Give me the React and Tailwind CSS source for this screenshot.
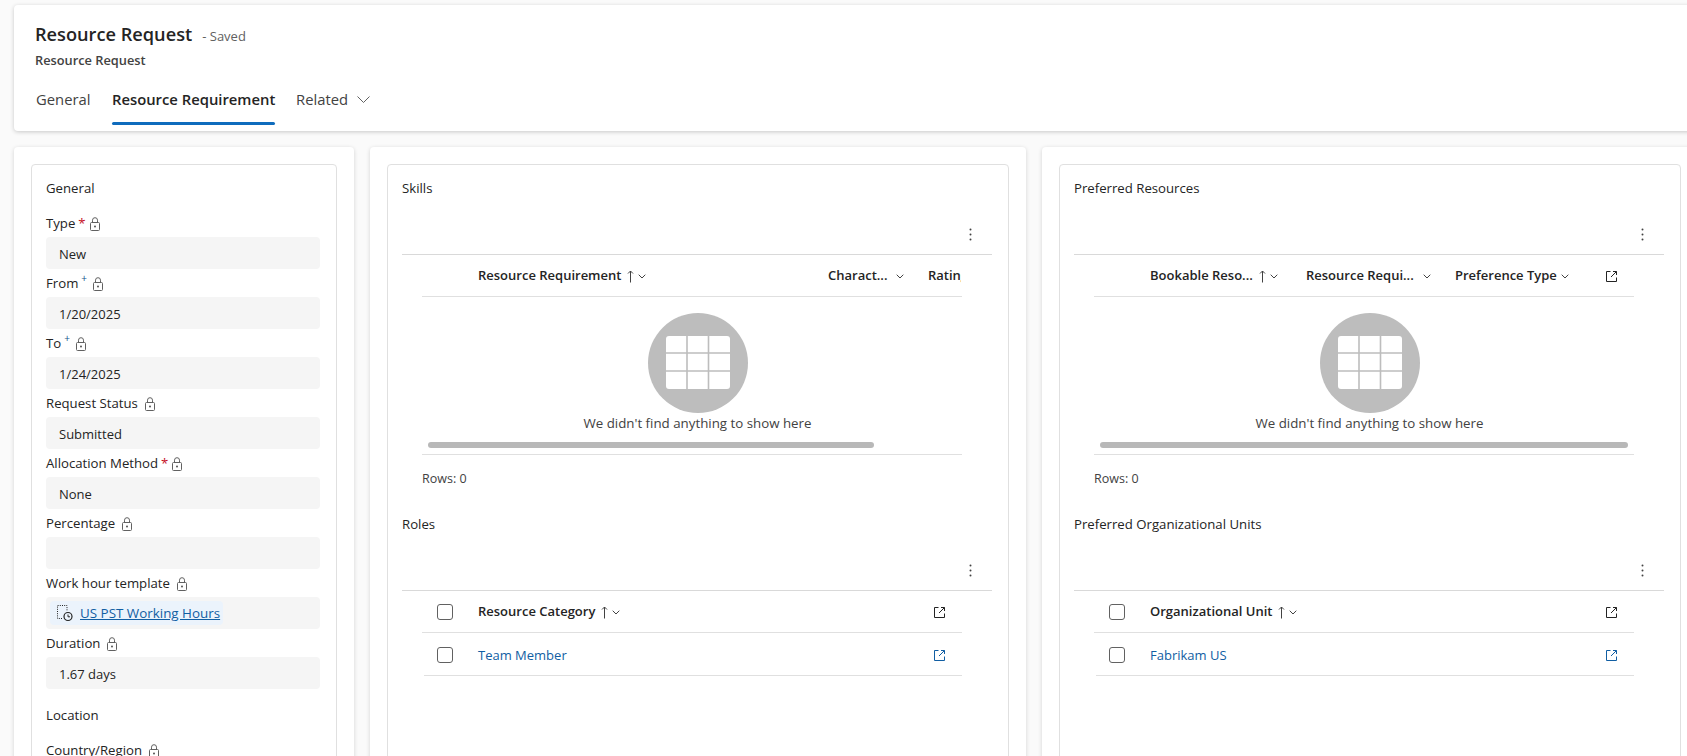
const fields = [
  { label: 'Type', mark: '*', value: 'New' },
  { label: 'From', mark: '+', value: '1/20/2025' },
  { label: 'To', mark: '+', value: '1/24/2025' },
  { label: 'Request Status', value: 'Submitted' },
  { label: 'Allocation Method', mark: '*', value: 'None' },
  { label: 'Percentage', value: '' },
  { label: 'Work hour template', lookup: 'US PST Working Hours' },
  { label: 'Duration', value: '1.67 days' },
];

function LockIcon() {
  return (
    <svg width="10" height="14" viewBox="0 0 10 14" fill="none" stroke="#616161" className="shrink-0">
      <rect x="0.5" y="5.5" width="9" height="8" rx="1" />
      <path d="M2.5 5.5V3.2a2.5 2.5 0 0 1 5 0v2.3" />
      <circle cx="5" cy="9.5" r="0.9" fill="#424242" stroke="none" />
    </svg>
  );
}

function RecordIcon() {
  return (
    <svg width="18" height="18" viewBox="0 0 18 18" fill="none" className="shrink-0">
      <path d="M6 14.5H1.5V1.5H11V7" stroke="#242424" strokeDasharray="1 1.2" />
      <circle cx="12" cy="12.5" r="4" stroke="#242424" strokeWidth="1.2" />
      <path d="M12 10.5v2.3h2" stroke="#242424" />
    </svg>
  );
}

function Chevron({ className = '' }) {
  return (
    <svg width="8" height="5" viewBox="0 0 8 5" fill="none" stroke="#424242" className={`shrink-0 ${className}`}>
      <path d="M0.7 0.7 4 4l3.3-3.3" />
    </svg>
  );
}

function SortArrow({ className = '' }) {
  return (
    <svg width="7" height="13" viewBox="0 0 7 13" fill="none" stroke="#424242" className={`shrink-0 ${className}`}>
      <path d="M3.5 12.5V1M1 3.5 3.5 1 6 3.5" />
    </svg>
  );
}

function OpenIcon({ color = '#242424' }) {
  return (
    <svg width="11" height="11" viewBox="0 0 11 11" fill="none" stroke={color} className="shrink-0">
      <path d="M4.5 0.5H0.5v10h10v-4M7 0.5h3.5V4M10.5 0.5 5 6" />
    </svg>
  );
}

function Kebab() {
  return (
    <svg width="3" height="13" viewBox="0 0 3 13" fill="#424242" className="shrink-0">
      <circle cx="1.5" cy="1.5" r="1" />
      <circle cx="1.5" cy="6.5" r="1" />
      <circle cx="1.5" cy="11.5" r="1" />
    </svg>
  );
}

function EmptyGrid() {
  return (
    <svg width="100" height="100" viewBox="0 0 100 100">
      <circle cx="50" cy="50" r="50" fill="#bdbdbd" />
      <rect x="18" y="23" width="64" height="53" rx="3" fill="#ffffff" />
      <path d="M39 23v53M60.5 23v53M18 40h64M18 58h64" stroke="#bdbdbd" strokeWidth="1.6" />
    </svg>
  );
}

function Checkbox() {
  return <span className="block h-4 w-4 rounded-[3px] border border-[#616161] bg-white" />;
}

function HeaderCell({ label, width, sorted }) {
  return (
    <div className={`flex h-full shrink-0 items-center overflow-hidden ${width}`}>
      <span className="whitespace-nowrap">{label}</span>
      {sorted && <SortArrow className="ml-[6px]" />}
      {sorted && <Chevron className="ml-[4px]" />}
    </div>
  );
}

function SubGrid({ title, children }) {
  return (
    <div>
      <div className="flex h-[46px] items-center pt-[2px] text-[13.2px] text-[#242424]">{title}</div>
      <div className="flex h-[44px] items-center justify-end border-b border-[#d9d9d9] pt-[3px] pr-[20px]">
        <Kebab />
      </div>
      {children}
    </div>
  );
}

function EmptyBody({ thumb }) {
  return (
    <>
      <div className="-mr-[1px] flex flex-col items-center pt-4">
        <EmptyGrid />
        <div className="flex h-5 items-center pt-[2px] text-[13.3px] text-[#424242]">We didn't find anything to show here</div>
      </div>
      <div className="mt-[9px] ml-[26px] h-[6px] rounded-[3px] bg-[#b8b8b8]" style={{ width: thumb }} />
      <div className="mt-[6px] mr-[30px] ml-5 h-px bg-[#e0e0e0]" />
      <div className="ml-5 flex h-[46px] items-center pt-[2px] text-[12.5px] text-[#424242]">Rows: 0</div>
    </>
  );
}

function Row({ name }) {
  return (
    <div className="mr-[30px] ml-[22px] flex h-[43px] items-center border-b border-[#e0e0e0] pt-px">
      <span className="ml-[13px] w-[41px]">
        <Checkbox />
      </span>
      <span className="pt-[2px] text-[#115ea3]">{name}</span>
      <span className="mt-[2px] mr-[17px] ml-auto">
        <OpenIcon color="#115ea3" />
      </span>
    </div>
  );
}

function GridHead({ children, open }) {
  return (
    <div className="mr-[30px] ml-5 flex h-[42px] items-center border-b border-[#e0e0e0] pt-px font-semibold text-[#242424]">
      {children}
      {open && (
        <span className="mr-[17px] ml-auto">
          <OpenIcon />
        </span>
      )}
    </div>
  );
}

function App() {
  return (
    <div className="h-[756px] w-[1687px] overflow-hidden bg-[#fafafa] pt-[5px] pl-[14px] font-['Open_Sans',sans-serif] text-[13px] text-[#242424]">
      <div className="h-[126px] w-[1690px] rounded-[4px] bg-white pt-[17px] pl-[21px] shadow-[0_1px_4px_rgba(0,0,0,0.2)]">
        <div className="flex h-[26px] items-center">
          <span className="text-[18.2px] font-semibold">Resource Request</span>
          <span className="ml-[10px] pt-[3px] text-[13px] text-[#616161]">- Saved</span>
        </div>
        <div className="mt-1 flex h-[18px] items-center text-[12.8px] font-semibold text-[#424242]">Resource Request</div>
        <div className="mt-[7px] flex items-start text-[14.8px] text-[#424242]">
          <div className="flex h-[45px] w-[77px] items-center pl-px">General</div>
          <div className="w-[184px]">
            <div className="flex h-[45px] w-[163px] items-center font-semibold whitespace-nowrap text-[#242424]">Resource Requirement</div>
            <div className="h-[3px] w-[163px] rounded-[2px] bg-[#0f6cbd]" />
          </div>
          <div className="flex h-[45px] items-center">
            Related
            <svg width="13" height="7" viewBox="0 0 13 7" fill="none" stroke="#616161" className="ml-[9px]">
              <path d="M0.5 0.5 6.5 6.5l6-6" />
            </svg>
          </div>
        </div>
      </div>

      <div className="mt-4 flex items-start gap-4">
        <div className="h-[640px] w-[340px] shrink-0 rounded-[4px] bg-white px-[17px] pt-[17px] shadow-[0_1px_4px_rgba(0,0,0,0.16)]">
          <div className="h-[700px] rounded-[4px] border border-[#e0e0e0] pr-[16px] pl-[14px] text-[13.2px]">
            <div className="flex h-[44px] items-center pt-[4px]">General</div>
            {fields.map((f) => (
              <div key={f.label}>
                <div className="flex h-[28px] items-center pt-px">
                  <span>{f.label}</span>
                  {f.mark === '*' && <span className="ml-[3px] text-[#c50f1f]">*</span>}
                  {f.mark === '+' && <span className="ml-[3px] -translate-y-[5px] text-[10px] text-[#0f548c]">+</span>}
                  <span className={f.mark === '+' ? 'ml-[6px]' : f.mark ? 'ml-[4px]' : 'ml-[7px]'}>
                    <LockIcon />
                  </span>
                </div>
                <div className="flex h-[32px] items-center rounded-[4px] bg-[#f5f5f5] px-[4px] text-[13px]">
                  {f.lookup ? (
                    <div className="flex h-[24px] w-[173px] items-center rounded-[4px] bg-[#ebf3fc] pl-[6px]">
                      <RecordIcon />
                      <span className="ml-[6px] text-[13.4px] whitespace-nowrap text-[#115ea3] underline">{f.lookup}</span>
                    </div>
                  ) : (
                    <span className="pt-[3px] pl-[9px]">{f.value}</span>
                  )}
                </div>
              </div>
            ))}
            <div className="flex h-[48px] items-center pt-[6px]">Location</div>
            <div className="flex h-[28px] items-center">
              <span>Country/Region</span>
              <span className="ml-[7px]">
                <LockIcon />
              </span>
            </div>
          </div>
        </div>

        <div className="h-[640px] w-[656px] shrink-0 rounded-[4px] bg-white px-[17px] pt-[17px] shadow-[0_1px_4px_rgba(0,0,0,0.16)]">
          <div className="h-[700px] rounded-[4px] border border-[#e0e0e0] pr-[16px] pl-[14px]">
            <SubGrid title="Skills">
              <GridHead>
                <HeaderCell label="" width="w-[56px]" />
                <HeaderCell label="Resource Requirement" width="w-[350px]" sorted />
                <div className="flex w-[100px] shrink-0 items-center">
                  Charact...
                  <Chevron className="ml-[9px]" />
                </div>
                <div className="w-[33px] shrink-0 overflow-hidden">Rating</div>
              </GridHead>
              <EmptyBody thumb={446} />
            </SubGrid>
            <SubGrid title="Roles">
              <GridHead open>
                <span className="ml-[15px] w-[41px]">
                  <Checkbox />
                </span>
                <HeaderCell label="Resource Category" width="w-[200px]" sorted />
              </GridHead>
              <Row name="Team Member" />
            </SubGrid>
          </div>
        </div>

        <div className="h-[640px] w-[656px] shrink-0 rounded-[4px] bg-white px-[17px] pt-[17px] shadow-[0_1px_4px_rgba(0,0,0,0.16)]">
          <div className="h-[700px] rounded-[4px] border border-[#e0e0e0] pr-[16px] pl-[14px]">
            <SubGrid title="Preferred Resources">
              <GridHead open>
                <HeaderCell label="" width="w-[56px]" />
                <HeaderCell label="Bookable Reso..." width="w-[156px]" sorted />
                <div className="flex w-[149px] shrink-0 items-center">
                  Resource Requi...
                  <Chevron className="ml-[9px]" />
                </div>
                <div className="flex shrink-0 items-center">
                  Preference Type
                  <Chevron className="ml-[4px]" />
                </div>
              </GridHead>
              <EmptyBody thumb={528} />
            </SubGrid>
            <SubGrid title="Preferred Organizational Units">
              <GridHead open>
                <span className="ml-[15px] w-[41px]">
                  <Checkbox />
                </span>
                <HeaderCell label="Organizational Unit" width="w-[200px]" sorted />
              </GridHead>
              <Row name="Fabrikam US" />
            </SubGrid>
          </div>
        </div>
      </div>
    </div>
  );
}

export default App;
